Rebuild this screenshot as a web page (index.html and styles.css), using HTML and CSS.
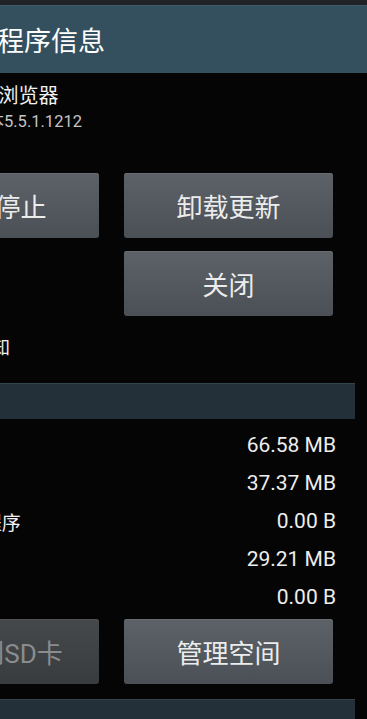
FILE: index.html
```html
<!DOCTYPE html>
<html lang="zh-CN">
<head>
    <meta charset="UTF-8">
    <title>应用程序信息</title>
    <link rel="stylesheet" href="styles.css">
</head>
<body>
    <div class="screen">
        <div class="status-strip"></div>

        <!-- Action bar -->
        <div class="action-bar">应用程序信息</div>

        <!-- App name + version -->
        <div class="app-info">
            <div class="app-name">QQ浏览器</div>
            <div class="app-version">版本5.5.1.1212</div>
        </div>

        <!-- Top buttons -->
        <div class="button-grid">
            <button class="btn">强行停止</button>
            <button class="btn">卸载更新</button>
            <div></div>
            <button class="btn">关闭</button>
        </div>

        <div class="check-row">显示通知</div>

        <!-- Storage -->
        <div class="section-bar">存储</div>
        <div class="rows">
            <div class="row"><span class="label">总计</span><span class="value">66.58 MB</span></div>
            <div class="row"><span class="label">应用程序</span><span class="value">37.37 MB</span></div>
            <div class="row"><span class="label">SD卡应用程序</span><span class="value">0.00 B</span></div>
            <div class="row"><span class="label">数据</span><span class="value">29.21 MB</span></div>
            <div class="row"><span class="label">SD卡数据</span><span class="value">0.00 B</span></div>
        </div>

        <div class="button-grid bottom">
            <button class="btn disabled">移动到SD卡</button>
            <button class="btn">管理空间</button>
        </div>

        <div class="section-bar">缓存</div>
    </div>
</body>
</html>
```

FILE: styles.css
```css
body {
    margin: 0;
    background-color: #050505;
    overflow: hidden;
    height: 719px;
    font-family: Roboto, "Noto Sans CJK SC", sans-serif;
    color: #f0f0f0;
}
.screen {
    width: 511px;
    margin-left: -144px;
}
.status-strip {
    height: 5px;
    background-color: #1f2326;
}
.action-bar {
    height: 68px;
    display: flex;
    align-items: center;
    padding-left: 87px;
    font-size: 27px;
    color: #fff;
    background-color: #34505f;
    border-top: 1px solid #3e5b6a;
    box-sizing: border-box;
}
.app-info {
    padding: 11px 0 0 115px;
}
.app-name {
    font-size: 20px;
    line-height: 24px;
    color: #f2f2f2;
}
.app-version {
    margin-top: 4px;
    font-size: 16.5px;
    line-height: 20px;
    color: #c4c4c4;
}
.button-grid {
    display: grid;
    grid-template-columns: 209px 209px;
    column-gap: 25px;
    row-gap: 13px;
    padding: 0 34px;
    margin-top: 41px;
}
.button-grid.bottom {
    margin-top: 3px;
}
.btn {
    height: 65px;
    border: none;
    border-radius: 3px;
    background: linear-gradient(#5c6268, #4a5055);
    box-shadow: inset 0 1px 0 #666c72;
    color: #ececec;
    font-family: Roboto, "Noto Sans CJK SC", sans-serif;
    font-size: 26px;
    padding: 0;
}
.btn.disabled {
    background: linear-gradient(#46494c, #393c3f);
    box-shadow: inset 0 1px 0 #505356;
    color: #8a8c8e;
}
.check-row {
    padding-left: 82px;
    margin-top: 22px;
    font-size: 18px;
    line-height: 20px;
}
.section-bar {
    margin: 25px 12px 0 12px;
    height: 36px;
    background-color: #233039;
    border-top: 1px solid #34444d;
    box-sizing: border-box;
    padding-left: 20px;
    display: flex;
    align-items: center;
    font-size: 18px;
    color: #dde;
}
.rows {
    padding-top: 7px;
}
.row {
    height: 38px;
    display: flex;
    justify-content: space-between;
    align-items: center;
    padding: 0 31px 0 46px;
}
.label {
    font-size: 19px;
}
.value {
    font-size: 21px;
    color: #eeeeee;
}
.bottom + .section-bar {
    margin-top: 15px;
}
```
